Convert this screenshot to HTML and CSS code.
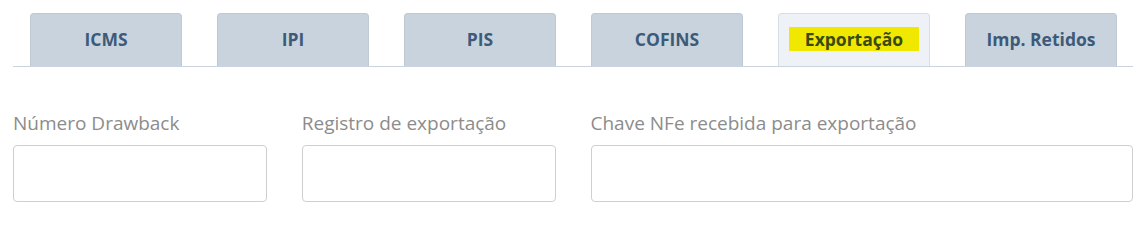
FILE: index.html
```html
<!DOCTYPE html>
<html lang="pt-BR">
<head>
<meta charset="utf-8">
<link rel="stylesheet" href="styles.css">
</head>
<body>
<div class="page">
  <nav class="tabs">
    <div class="tab">ICMS</div>
    <div class="tab">IPI</div>
    <div class="tab">PIS</div>
    <div class="tab">COFINS</div>
    <div class="tab active"><span class="mark">Exportação</span></div>
    <div class="tab">Imp. Retidos</div>
  </nav>
  <div class="row">
    <div class="col col-3">
      <label class="label">Número Drawback</label>
      <div class="input"></div>
    </div>
    <div class="col col-3">
      <label class="label">Registro de exportação</label>
      <div class="input"></div>
    </div>
    <div class="col col-6">
      <label class="label">Chave NFe recebida para exportação</label>
      <div class="input"></div>
    </div>
  </div>
</div>
</body>
</html>
```
FILE: styles.css
```css
html, body {
  margin: 0;
  padding: 0;
  background: #ffffff;
}
body {
  font-family: "Open Sans", Lato, sans-serif;
}
.page {
  padding: 13px 8px 0 13px;
}
.tabs {
  display: flex;
  gap: 35px;
  padding-left: 17px;
  border-bottom: 1px solid #c9d4e0;
}
.tab {
  box-sizing: border-box;
  width: 152px;
  height: 53px;
  padding-bottom: 2px;
  background: #c9d3dd;
  border: 1px solid #bfc9d4;
  border-bottom: none;
  border-radius: 4px 4px 0 0;
  display: flex;
  align-items: center;
  justify-content: center;
  font-weight: 700;
  font-size: 17.5px;
  color: #3d5a79;
}
.tab.active {
  background: #eef2f7;
  border-color: #d6dee7;
}
.mark {
  background: #f0e800;
  color: #3b4a12;
  padding: 3px 16px;
  line-height: 18px;
}
.row {
  display: flex;
  margin: 45px -17.5px 0;
}
.col {
  box-sizing: border-box;
  padding: 0 17.5px;
}
.col-3 { flex: 0 0 25%; }
.col-6 { flex: 0 0 50%; }
.label {
  display: block;
  font-size: 19px;
  color: #8c8c8c;
  line-height: 24px;
  margin-top: -1px;
  margin-bottom: 10px;
}
.input {
  box-sizing: border-box;
  height: 57px;
  border: 1px solid #cfcfcf;
  border-radius: 4px;
  background: #fff;
}
```
